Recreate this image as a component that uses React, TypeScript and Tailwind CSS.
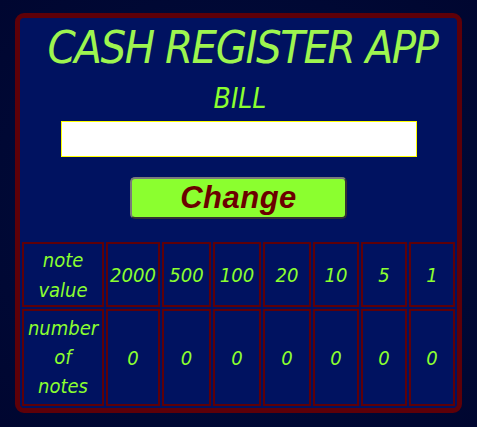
import React from "react";

const notes = [2000, 500, 100, 20, 10, 5, 1];

export default function App() {
  const font = { fontFamily: '"DejaVu Sans Condensed", "DejaVu Sans", sans-serif' };
  return (
    <div className="w-[477px] h-[427px] bg-[radial-gradient(ellipse_at_center,#000c42_0%,#000936_60%,#000630_100%)] pt-[13px] pl-[15px]">
      <div
        className="w-[447px] h-[400px] border-[5px] border-[#5e0008] rounded-[9px] bg-[#001260] flex flex-col items-center"
        style={font}
      >
        <h1 className="mt-[7px] h-[46px] leading-[46px] text-[45px] italic text-[#9ef54f] tracking-[-1.5px] pl-[8px] whitespace-nowrap">
          CASH REGISTER APP
        </h1>
        <div className="mt-[15px] h-[26px] leading-[26px] text-[28px] italic text-[#8bff2f] pl-[3px]">
          BILL
        </div>
        <input
          className="mt-[9px] w-[356px] h-[36px] bg-white border border-[#ffff00] outline-none ml-[1px]"
          type="text"
        />
        <button
          className="mt-[20px] w-[217px] h-[42px] bg-[#8bff2f] border-2 border-t-[#7a7a7a] border-l-[#7a7a7a] border-b-[#333333] border-r-[#333333] rounded-[5px] text-[#6b0000] text-[31px] font-bold italic leading-[38px] tracking-[0.5px]"
          style={{ fontFamily: '"Liberation Sans", Arial, sans-serif' }}
        >
          Change
        </button>
        <div className="mt-[21px] w-full p-[2px] pb-0 grid grid-cols-[82px_54px_49px_48px_48px_46px_46px_46px] grid-rows-[65px_97px] gap-[2px] text-[#8bff2f] italic text-[20px]">
          <div className="border-2 border-[#5e0008] flex flex-col items-center justify-center leading-[30px]">
            <span>note</span>
            <span>value</span>
          </div>
          {notes.map((n) => (
            <div key={n} className="border-2 border-[#5e0008] flex items-center justify-center">
              {n}
            </div>
          ))}
          <div className="border-2 border-[#5e0008] flex flex-col items-center justify-center leading-[29px]">
            <span>number</span>
            <span>of</span>
            <span>notes</span>
          </div>
          {notes.map((n) => (
            <div key={"c" + n} className="border-2 border-[#5e0008] flex items-center justify-center">
              0
            </div>
          ))}
        </div>
      </div>
    </div>
  );
}
